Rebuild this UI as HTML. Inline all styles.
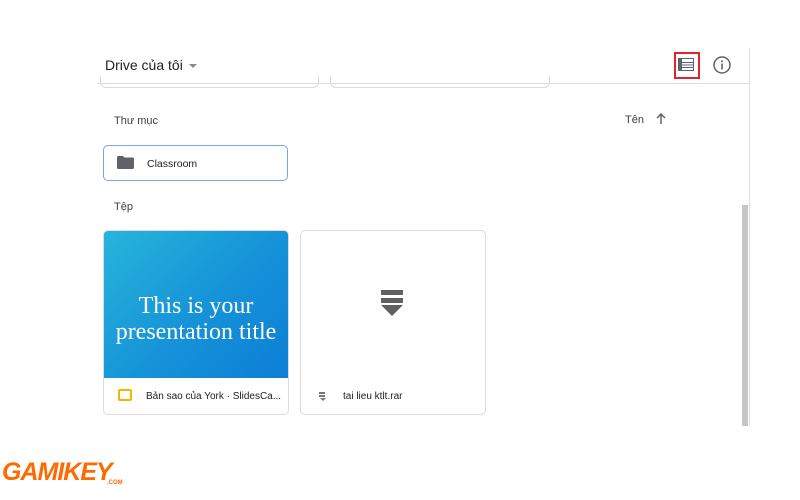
<!DOCTYPE html>
<html><head><style>
body{margin:0;width:800px;height:500px;background:#fff;position:relative;overflow:hidden;font-family:"Liberation Sans",Arial,sans-serif;color:#3c4043}
.a{position:absolute}
</style></head><body>
<div class="a" style="left:749px;top:48px;width:1px;height:378px;background:#e0e0e0"></div>
<div class="a" style="left:742px;top:205px;width:6px;height:221px;background:#c6c6c6"></div>
<div class="a" style="left:105px;top:57px;font-size:14px;color:#202124">Drive của tôi</div>
<div class="a" style="left:189px;top:64px;width:0;height:0;border-left:4px solid transparent;border-right:4px solid transparent;border-top:4px solid #888"></div>
<div class="a" style="left:97px;top:83px;width:652px;height:1px;background:#dadce0"></div>
<div class="a" style="left:100px;top:76px;width:217px;height:11px;border:1px solid #dadce0;border-top:none;border-radius:0 0 6px 6px"></div>
<div class="a" style="left:330px;top:76px;width:218px;height:11px;border:1px solid #dadce0;border-top:none;border-radius:0 0 6px 6px"></div>
<div class="a" style="left:674px;top:52px;width:22px;height:23px;border:2px solid #e0242b"></div>
<svg class="a" style="left:678px;top:58px" width="16" height="13" viewBox="0 0 16 13"><rect x="0.5" y="0.5" width="15" height="12" fill="none" stroke="#5f6368"/><rect x="1" y="1" width="3" height="11" fill="#5f6368"/><path d="M1 4.5h14M1 7h14M1 9.5h14" stroke="#5f6368"/></svg>
<svg class="a" style="left:712px;top:55px" width="20" height="20" viewBox="0 0 20 20"><circle cx="10" cy="10" r="8" fill="none" stroke="#5f6368" stroke-width="1.5"/><rect x="9.2" y="8.5" width="1.6" height="6" fill="#5f6368"/><circle cx="10" cy="6.3" r="1" fill="#5f6368"/></svg>
<div class="a" style="left:114px;top:115px;font-size:11px">Thư mục</div>
<div class="a" style="left:625px;top:114px;font-size:11px">Tên</div>
<svg class="a" style="left:655px;top:113px" width="12" height="12" viewBox="0 0 12 12"><path d="M6 11V1M2 5l4-4 4 4" fill="none" stroke="#5f6368" stroke-width="1.5"/></svg>
<div class="a" style="left:103px;top:145px;width:183px;height:34px;border:1.5px solid #7aa6e0;border-radius:5px"></div>
<svg class="a" style="left:117px;top:156px" width="17" height="13" viewBox="0 0 17 13"><path d="M0 1.5Q0 0 1.5 0H6l1.5 1.5h8Q17 1.5 17 3v8.5Q17 13 15.5 13h-14Q0 13 0 11.5z" fill="#5f6368"/></svg>
<div class="a" style="left:147px;top:158px;font-size:10.5px;color:#202124">Classroom</div>
<div class="a" style="left:114px;top:201px;font-size:11px">Tệp</div>
<div class="a" style="left:103px;top:230px;width:184px;height:183px;border:1px solid #dadce0;border-radius:5px;overflow:hidden">
<div style="height:147px;background:linear-gradient(135deg,#27b5da,#1592d8 55%,#0d7fd6);color:#fff;font-family:'Liberation Serif',serif;font-size:24px;text-align:center;padding-top:62px;box-sizing:border-box;line-height:26px;white-space:nowrap">This is your<br>presentation title</div>
</div>
<div class="a" style="left:118px;top:389px;width:10px;height:8px;border:2px solid #f4b400;border-radius:2px"></div>
<div class="a" style="left:146px;top:391px;font-size:10px;color:#202124">Bản sao của York · SlidesCa...</div>
<div class="a" style="left:300px;top:230px;width:184px;height:183px;border:1px solid #dadce0;border-radius:5px"></div>
<div class="a" style="left:381px;top:290px;width:22px;height:5px;background:#616161"></div>
<div class="a" style="left:381px;top:298px;width:22px;height:5px;background:#616161"></div>
<div class="a" style="left:381px;top:305px;width:0;height:0;border-left:11px solid transparent;border-right:11px solid transparent;border-top:11px solid #616161"></div>
<div class="a" style="left:319px;top:392px;width:6px;height:2px;background:#777;box-shadow:0 3px 0 #777"></div>
<div class="a" style="left:320px;top:398px;width:0;height:0;border-left:3px solid transparent;border-right:3px solid transparent;border-top:3px solid #777"></div>
<div class="a" style="left:343px;top:391px;font-size:10px;color:#202124">tai lieu ktlt.rar</div>
<div class="a" style="left:2px;top:458px;font-size:25px;font-weight:bold;color:#ff6a00;letter-spacing:-1px;font-style:italic">GAMIKEY</div>
<div class="a" style="left:107px;top:480px;font-size:6px;color:#ff6a00;font-weight:bold">.COM</div>
</body></html>
